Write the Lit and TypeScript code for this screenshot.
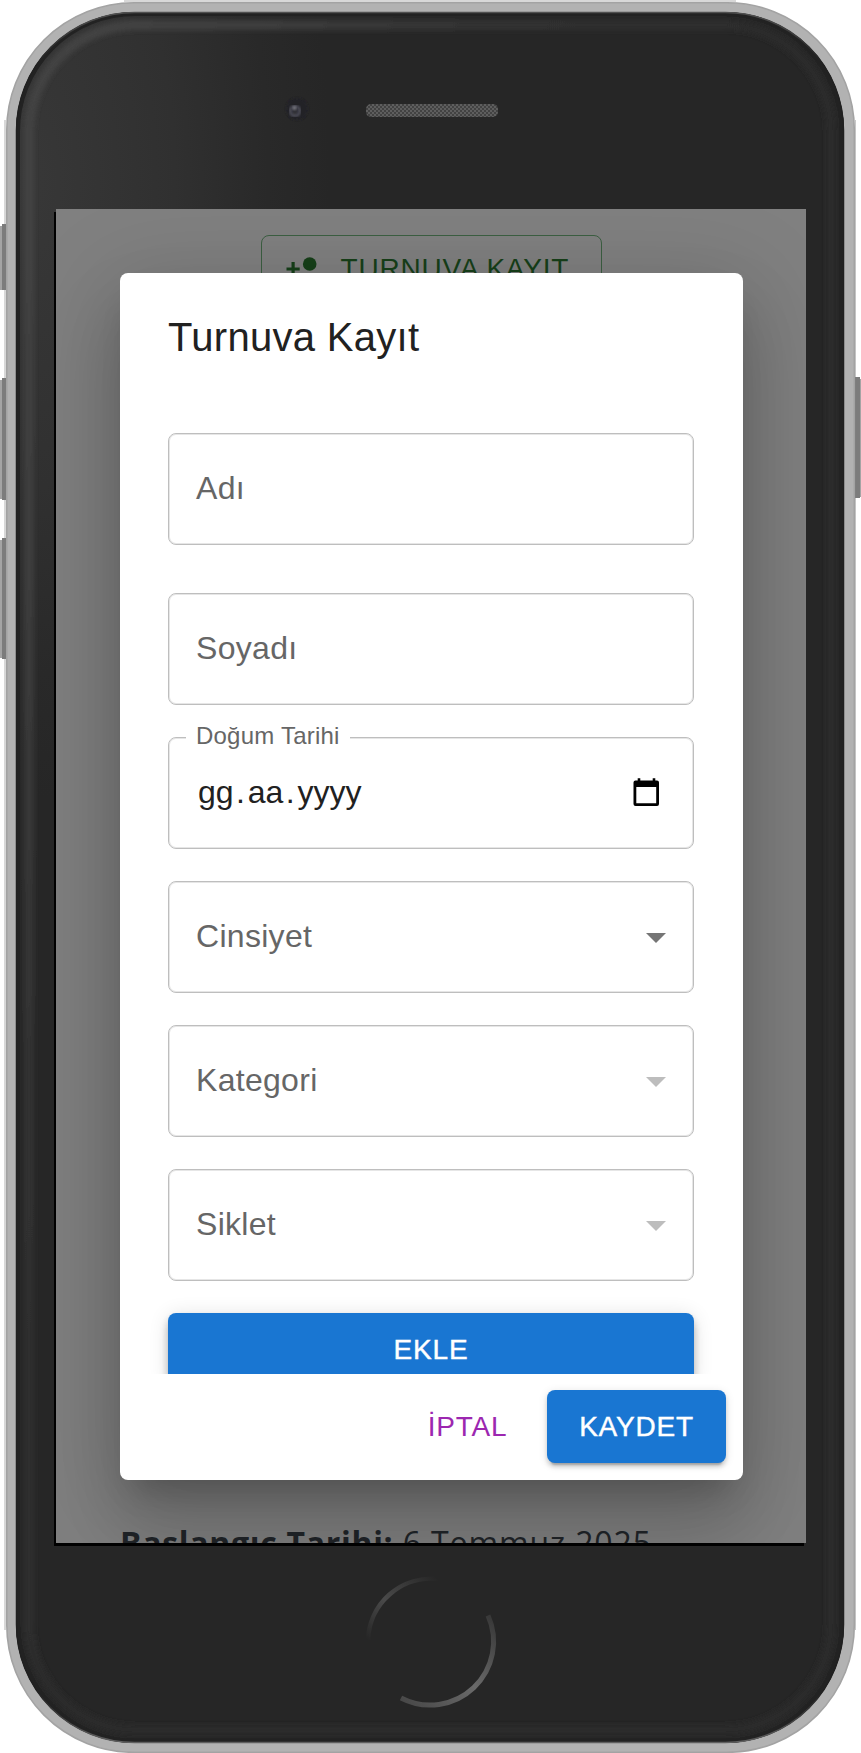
import { LitElement, html, css, nothing } from "lit";
import { customElement, property } from "lit/decorators.js";

@customElement("form-field")
class FormField extends LitElement {
  @property() label = "";
  @property() kind = "text";
  @property() value = "";
  @property({ type: Boolean }) disabled = false;

  static styles = css`
    :host { display: block; height: 112px; }
    .box {
      position: relative; box-sizing: border-box; height: 112px; margin: 0; width: 526px;
      border: 1px solid #bebebe; border-radius: 8px; padding: 0 27px;
      display: flex; align-items: center; justify-content: space-between;
      box-shadow: inset 0 0 0 1px #e6e6e6;
    }
    .label { font-size: 32px; letter-spacing: 0.3px; color: #666; line-height: 46px; padding-bottom: 2px; }
    .value { font-size: 32px; color: #212121; line-height: 46px; padding: 0 0 2px 2px; display: flex; }
    .dot { padding: 0 3px 0 2.3px; }
    .float {
      position: absolute; left: 17px; top: -18px; padding: 0 10px; background: #fff;
      font-size: 24px; letter-spacing: 0.22px; color: #666; line-height: 32px;
    }
    svg { display: block; }
    .cal { margin: 0 5px 2px 0; }
    .arrow { margin-right: -14px; fill: #757575; }
    .disabled { fill: #bdbdbd; }
  `;

  render() {
    return html`<div class="box">
      ${this.kind === "date"
        ? html`<span class="float">${this.label}</span>
            <span class="value">${this.value.split(".").map((p, i) => html`${i ? html`<span class="dot">.</span>` : nothing}<span>${p}</span>`)}</span>
            <svg class="cal" width="30" height="30" viewBox="0 0 30 30">
              <path fill-rule="evenodd" d="M4.500 3.500H6.700V1.300h2.600V3.500h12.400V1.300h2.600V3.500h1.700a2 2 0 0 1 2 2v21.500a2 2 0 0 1-2 2H4.500a2 2 0 0 1-2-2V5.500a2 2 0 0 1 2-2zM5.300 10v16.200h19.900V10z"/>
            </svg>`
        : html`<span class="label">${this.label}</span>`}
      ${this.kind === "select"
        ? html`<svg class="arrow ${this.disabled ? "disabled" : ""}" width="48" height="48" viewBox="0 0 24 24"><path d="M7 10l5 5 5-5z"/></svg>`
        : nothing}
    </div>`;
  }
}

@customElement("device-frame")
class DeviceFrame extends LitElement {
  static styles = css`
    :host { display: block; width: 861px; height: 1753px; }
    svg { display: block; }
  `;
  render() {
    return html`<svg width="861" height="1753" viewBox="0 0 861 1753">
      <defs>
        <radialGradient id="shine" gradientUnits="userSpaceOnUse" cx="20" cy="120" r="310" gradientTransform="translate(0 -60) scale(1 2)">
          <stop offset="0" stop-color="#383838"/><stop offset=".5" stop-color="#303030"/><stop offset=".8" stop-color="#292929"/><stop offset="1" stop-color="#262626"/>
        </radialGradient>
        <linearGradient id="rim" gradientUnits="userSpaceOnUse" x1="0" y1="300" x2="700" y2="600">
          <stop offset="0" stop-color="#434343"/><stop offset=".5" stop-color="#303030"/><stop offset="1" stop-color="#292929"/>
        </linearGradient>
        <linearGradient id="edge" x1="0" y1="0" x2="0" y2="1">
          <stop offset="0" stop-color="#505050"/><stop offset=".03" stop-color="#202020"/><stop offset=".97" stop-color="#202020"/><stop offset="1" stop-color="#606060"/>
        </linearGradient>
        <linearGradient id="arcA" x1="0" y1="1" x2="1" y2="0">
          <stop offset="0" stop-color="#262626"/><stop offset=".45" stop-color="#4a4a4a"/><stop offset="1" stop-color="#262626"/>
        </linearGradient>
        <linearGradient id="arcB" x1="1" y1="0" x2="0" y2="1">
          <stop offset="0" stop-color="#363636"/><stop offset=".5" stop-color="#6a6a6a"/><stop offset="1" stop-color="#464646"/>
        </linearGradient>
        <pattern id="mesh" width="4" height="4" patternUnits="userSpaceOnUse">
          <rect width="4" height="4" fill="#424242"/>
          <rect width="2" height="2" fill="#5e5e5e"/><rect x="2" y="2" width="2" height="2" fill="#5e5e5e"/>
        </pattern>
        <filter id="soft"><feGaussianBlur stdDeviation="2.5"/></filter>
        <filter id="lens"><feGaussianBlur stdDeviation=".8"/></filter>
      </defs>
      <rect x="4" y="120" width="2" height="1510" fill="#d8d8d8"/>
      <rect x="855" y="120" width="1" height="1510" fill="#c8c8c8"/>
      <rect x="124" y="0" width="612" height="2" fill="#d8d8d8"/>
      <g fill="#7c7c7c">
        <rect x="2" y="224" width="6" height="66"/><rect x="2" y="378" width="6" height="122"/>
        <rect x="2" y="538" width="6" height="121"/><rect x="853" y="377" width="7" height="121"/>
      </g>
      <g fill="#a4a4a4">
        <rect x="0" y="226" width="2" height="64"/><rect x="0" y="380" width="2" height="119"/>
        <rect x="0" y="540" width="2" height="118"/><rect x="860" y="379" width="1" height="118"/>
      </g>
      <rect x="6.800" y="2.800" width="847.500" height="1749.500" rx="127" fill="#b2b2b2" stroke="#a3a3a3" stroke-width="1.600"/>
      <rect x="16" y="12" width="828" height="1731" rx="119" fill="url(#shine)"/>
      <rect x="29" y="25" width="802" height="1705" rx="107" fill="none" stroke="url(#rim)" stroke-width="10" filter="url(#soft)"/>
      <rect x="18" y="14" width="824" height="1727" rx="117" fill="none" stroke="#222" stroke-width="4"/>
      <rect x="16.500" y="12.500" width="827" height="1730" rx="118" fill="none" stroke="url(#edge)" stroke-width="1.500"/>
      <circle cx="297" cy="109" r="11" fill="#222128" filter="url(#lens)"/>
      <circle cx="295" cy="111" r="5" fill="#303038" stroke="#4e4e58" stroke-width="2.500" filter="url(#lens)"/>
      <circle cx="294.500" cy="108" r="2" fill="#77777f" filter="url(#lens)"/>
      <rect x="366" y="104" width="132" height="13" rx="5" fill="url(#mesh)"/>
      <rect x="54" y="212" width="750" height="1334" fill="#000"/>
      <path d="M368 1640A63.500 63.500 0 0 1 438 1579" fill="none" stroke="url(#arcA)" stroke-width="4.500"/>
      <path d="M488 1615.500A63.500 63.500 0 0 1 401 1698" fill="none" stroke="url(#arcB)" stroke-width="5"/>
    </svg>`;
  }
}

@customElement("app-root")
class AppRoot extends LitElement {
  static styles = css`
    :host {
      display: block; width: 861px; height: 1753px; overflow: hidden; background: #fff;
      font-family: "Liberation Sans", Arial, sans-serif;
    }
    .phone { display: grid; }
    device-frame, .screen { grid-area: 1 / 1; }
    .screen {
      margin: 209px 0 0 56px; width: 750px; height: 1334px; overflow: hidden;
      display: grid; grid-template: 1334px / 750px; background: #808080; z-index: 1;
    }
    .page, .overlay { grid-area: 1 / 1; }
    .overlay { z-index: 1; }
    .page { display: flex; flex-direction: column; justify-content: space-between; align-items: center; }
    .register {
      margin-top: 26px; width: 341px; height: 73px; box-sizing: border-box;
      border: 1px solid #3c5f42; border-radius: 8px; display: flex; align-items: flex-start;
      padding: 15px 0 0 22px; gap: 21px; color: #17401a; font-size: 28px; line-height: 36px;
      letter-spacing: 0.8px; white-space: nowrap;
    }
    .register svg { fill: #17401a; display: block; }
    .date {
      align-self: stretch; height: 24px; overflow: visible; padding-left: 64px; color: #212529;
      font: 32px/48px "Open Sans", "Noto Sans", sans-serif; letter-spacing: 0.9px; white-space: nowrap;
    }
    .date b { letter-spacing: 0.7px; }
    .overlay { padding: 64px; display: flex; }
    .dialog {
      width: 622.5px; height: 1206.5px; box-sizing: border-box; background: #fff; border-radius: 8px;
      display: flex; flex-direction: column; flex: none; padding: 0 0.5px 0.5px 0;
      box-shadow: 0 22px 30px -14px rgba(0,0,0,.2), 0 48px 76px 6px rgba(0,0,0,.14), 0 18px 92px 16px rgba(0,0,0,.12);
    }
    .title {
      margin: 0; padding: 32px 48px; font-size: 40px; font-weight: 400; line-height: 64px;
      letter-spacing: 0.3px; color: #212121;
    }
    .content { flex: 1; min-height: 0; overflow: hidden; padding: 32px 48px 0; display: flex; flex-direction: column; gap: 32px; }
    .content form-field:first-child { margin-bottom: 16px; }
    .content > * { flex: none; }
    .btn {
      box-sizing: border-box; border: 0; margin: 0; font: 28px/49px "Liberation Sans", Arial, sans-serif;
      letter-spacing: 0.8px; height: 73px; padding: 12px 0; border-radius: 8px; text-align: center;
      color: #fff; background: #1976d2; -webkit-text-stroke: 0.4px currentColor;
      box-shadow: 0 6px 2px -4px rgba(0,0,0,.2), 0 4px 4px rgba(0,0,0,.14), 0 2px 10px rgba(0,0,0,.12);
    }
    .add { width: 526px;
      box-shadow: 0 4px 8px -2px rgba(0,0,0,.2), 0 8px 10px rgba(0,0,0,.14), 0 2px 20px rgba(0,0,0,.12); }
    .actions { flex: none; height: 105px; box-sizing: border-box; padding: 16px; display: flex; justify-content: flex-end; gap: 16px; }
    .save { width: 179px; }
    .cancel { width: 127px; background: none; box-shadow: none; color: #9c27b0; -webkit-text-stroke: 0; }
  `;

  render() {
    return html`<div class="phone">
      <device-frame></device-frame>
      <div class="screen">
        <div class="page">
          <div class="register">
            <svg width="36" height="36" viewBox="0 0 36 36">
              <circle cx="25.700" cy="13" r="6.800"/>
              <path d="M7.500 11h3.200v5.400h5v3.200h-5v5.400H7.500v-5.400h-5v-3.200h5zM12 33v-3c0-4.500 9-6.800 13.500-6.800S39 25.500 39 30v3z"/>
            </svg>
            <span>TURNUVA KAYIT</span>
          </div>
          <div class="date"><b>Başlangıç Tarihi:</b> 6 Temmuz 2025</div>
        </div>
        <div class="overlay">
          <div class="dialog">
            <h2 class="title">Turnuva Kayıt</h2>
            <div class="content">
              <form-field label="Adı"></form-field>
              <form-field label="Soyadı"></form-field>
              <form-field label="Doğum Tarihi" kind="date" value="gg.aa.yyyy"></form-field>
              <form-field label="Cinsiyet" kind="select"></form-field>
              <form-field label="Kategori" kind="select" disabled></form-field>
              <form-field label="Siklet" kind="select" disabled></form-field>
              <button class="btn add">EKLE</button>
            </div>
            <div class="actions">
              <button class="btn cancel">İPTAL</button>
              <button class="btn save">KAYDET</button>
            </div>
          </div>
        </div>
      </div>
    </div>`;
  }
}
